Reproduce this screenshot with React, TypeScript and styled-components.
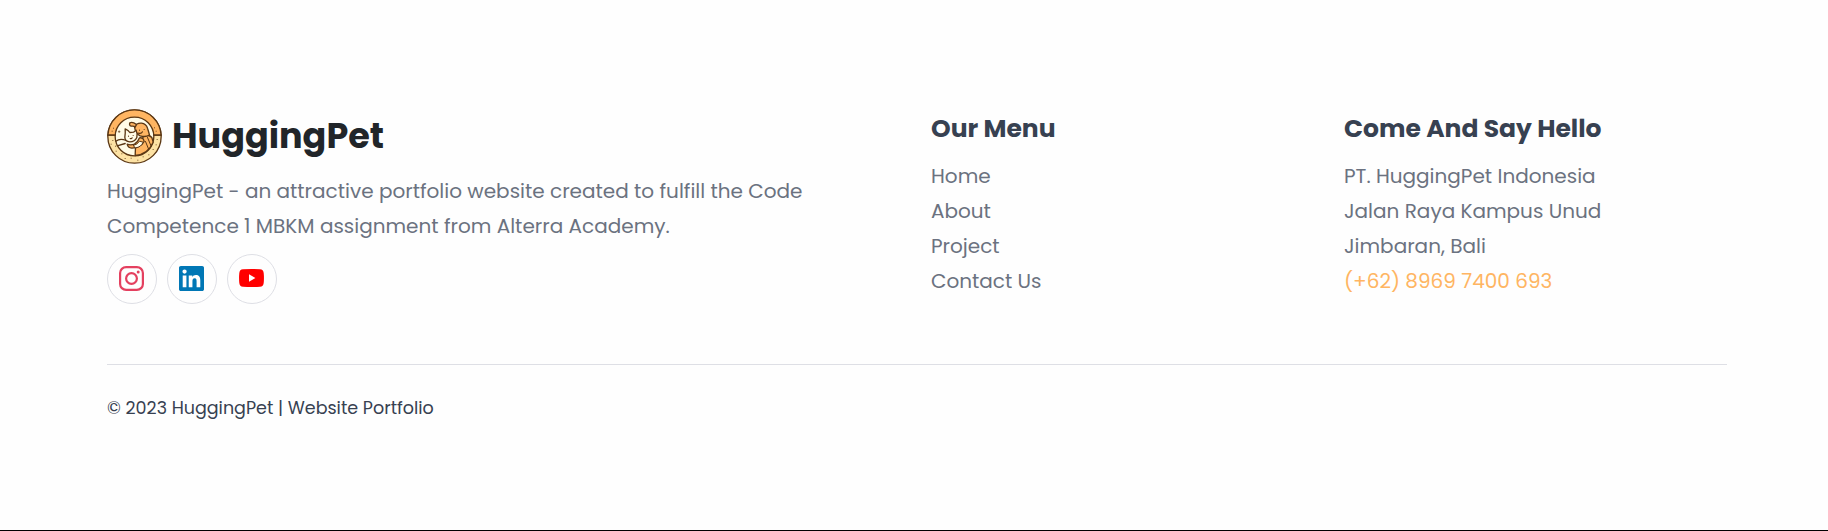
import React from "react";
import styled, { createGlobalStyle } from "styled-components";

const GlobalStyle = createGlobalStyle`
  * { box-sizing: border-box; }
  body { margin: 0; background: #fefefe; font-family: Poppins, Inter, sans-serif; }
  p, h1, h2 { margin: 0; padding: 0; }
  a { color: inherit; text-decoration: none; }
`;

const Footer = styled.footer`
  height: 531px;
  padding: 109px 101px 0 107px;
  border-bottom: 1px solid #000;
`;

const Columns = styled.div`
  display: grid;
  grid-template-columns: 824px 413px 1fr;
  height: 255px;
`;

const Brand = styled.div`
  display: flex;
  gap: 10px;
  height: 65px;
`;

const BrandName = styled.h1`
  color: #212529;
  font-size: 35px;
  font-weight: 700;
  line-height: 53px;
`;

const Copy = styled.div`
  color: #6b7280;
  font-size: 20px;
  line-height: 35px;
`;

const Line = styled.span`
  display: block;
  white-space: nowrap;
`;

const Phone = styled(Line)`
  color: #ffb562;
`;

const Heading = styled.h2`
  margin: 0 0 11px;
  color: #374151;
  font-size: 25px;
  font-weight: 700;
  line-height: 39px;
`;

const Socials = styled.div`
  display: flex;
  gap: 10px;
  margin-top: 10px;
`;

const SocialLink = styled.a`
  display: flex;
  width: 50px;
  height: 50px;
  padding: 11px 12px 12px 11px;
  border: 1px solid #dedfe5;
  border-radius: 50%;
`;

const Legal = styled.div`
  width: 1620px;
  padding-top: 26px;
  border-top: 1px solid #dedfe5;
  color: #374151;
  font-size: 17.5px;
  line-height: 35px;
`;

const Logo = () => (
  <svg width="55" height="55" viewBox="21.5 26.5 165 165" fill="none" stroke="#5b3714" strokeWidth="4" strokeLinecap="round" strokeLinejoin="round">
    <circle cx="104" cy="109" r="80" fill="#fde2a4" />
    <path d="M24.1 105A80 80 0 0 1 183.900 105z" fill="#ffb562" />
    <circle cx="104" cy="109" r="58" fill="#fffbe6" />
    <path d="M132 103q14-1 24 9l4 14q-14 35-54 40l1-24q20-15 25-39z" fill="#ffb562" />
    <path d="M48 123q13-10 31-2M52 137l24-7" />
    <path d="M143 112l11 26M137 124l9 22" strokeWidth="3" />
    <path d="M104 80q6-12 21-11 14 2 18 15 5 15 6 21-13 7-28 2-14-6-17-27z" fill="#ffb562" />
    <path d="M110 73q-12-9-20-5-3 8 4 10 10-1 12 3z" fill="#ffb562" />
    <path d="M76 86q10 4 14 11l11-1 8-6q4 9 2 22-6 13-21 13-15-2-15-14 2-12 1-25z" fill="#fffbe6" />
    <path d="M82 132q2 11 14 12 26-1 37-20-2-13-14-11-4 12-15 19-12 4-22 0z" fill="#ffb562" />
    <path d="M101 136q12-3 18-13l11 3q-6 15-22 17z" fill="#fffbe6" strokeWidth="3" />
    <path d="M116 99q8 3 12-4M119 90v.1M133 88v.1M86 108v.1M100 106v.1M91 115q4 2 6-2" strokeWidth="3.5" />
    <path d="M58 92v5M55.500 94.500h5" strokeWidth="2" />
    <path d="M24 105h22M162 105h22" />
    <path d="M37 93v.1M41 84v.1M169 93v.1M164 83v.1M39 121v.1M34 132v.1M47 138v.1M49 153v.1M66 161v.1M76 175v.1M94 174v.1M114 180v.1M130 170v.1M147 164v.1M160 148v.1M169 134v.1M172 118v.1" strokeWidth="3" />
  </svg>
);

const Instagram = () => (
  <svg width="25" height="25" viewBox="0 0 25 25" fill="none" stroke="#e4405f" strokeWidth="2.2">
    <rect x="1.100" y="1.100" width="22.800" height="22.800" rx="6" />
    <circle cx="12.500" cy="12.500" r="5.400" />
    <circle cx="19.200" cy="5.900" r="1.500" fill="#e4405f" stroke="none" />
  </svg>
);

const LinkedIn = () => (
  <svg width="25" height="25" viewBox="0 0 24 24">
    <path fill="#0077b5" d="M20.447 20.452h-3.554v-5.569c0-1.328-.027-3.037-1.852-3.037-1.853 0-2.136 1.445-2.136 2.939v5.667H9.351V9h3.414v1.561h.046c.477-.9 1.637-1.850 3.370-1.850 3.601 0 4.267 2.370 4.267 5.455v6.286zM5.337 7.433a2.062 2.062 0 0 1-2.063-2.065 2.064 2.064 0 1 1 2.063 2.065zm1.782 13.019H3.555V9h3.564v11.452zM22.225 0H1.771C.792 0 0 .774 0 1.729v20.542C0 23.227.792 24 1.771 24h20.451C23.200 24 24 23.227 24 22.271V1.729C24 .774 23.200 0 22.222 0h.003z" />
  </svg>
);

const YouTube = () => (
  <svg width="25" height="25" viewBox="0 0 25 25">
    <path fill="#f00" d="M4 3.300Q12.500 2.700 21 3.300 24.400 3.600 24.700 7 25.200 12 24.700 17 24.400 20.500 21 20.700 12.500 21.300 4 20.700.6 20.500.3 17-.2 12 .3 7 .6 3.600 4 3.300z" />
    <path fill="#fff" d="M10 8.300v7.400l6.400-3.700z" />
  </svg>
);

const menu = ["Home", "About", "Project", "Contact Us"];
const address = ["PT. HuggingPet Indonesia", "Jalan Raya Kampus Unud", "Jimbaran, Bali"];

export default function App() {
  return (
    <Footer>
      <GlobalStyle />
      <Columns>
        <div>
          <Brand>
            <Logo />
            <BrandName>HuggingPet</BrandName>
          </Brand>
          <Copy>
            <Line>HuggingPet - an attractive portfolio website created to fulfill the Code</Line>
            <Line>Competence 1 MBKM assignment from Alterra Academy.</Line>
          </Copy>
          <Socials>
            <SocialLink href="#"><Instagram /></SocialLink>
            <SocialLink href="#"><LinkedIn /></SocialLink>
            <SocialLink href="#"><YouTube /></SocialLink>
          </Socials>
        </div>
        <div>
          <Heading>Our Menu</Heading>
          <Copy>
            {menu.map((label) => (
              <Line as="a" href="#" key={label}>{label}</Line>
            ))}
          </Copy>
        </div>
        <div>
          <Heading>Come And Say Hello</Heading>
          <Copy>
            {address.map((text) => (
              <Line key={text}>{text}</Line>
            ))}
            <Phone>(+62) 8969 7400 693</Phone>
          </Copy>
        </div>
      </Columns>
      <Legal>© 2023 HuggingPet | Website Portfolio</Legal>
    </Footer>
  );
}
